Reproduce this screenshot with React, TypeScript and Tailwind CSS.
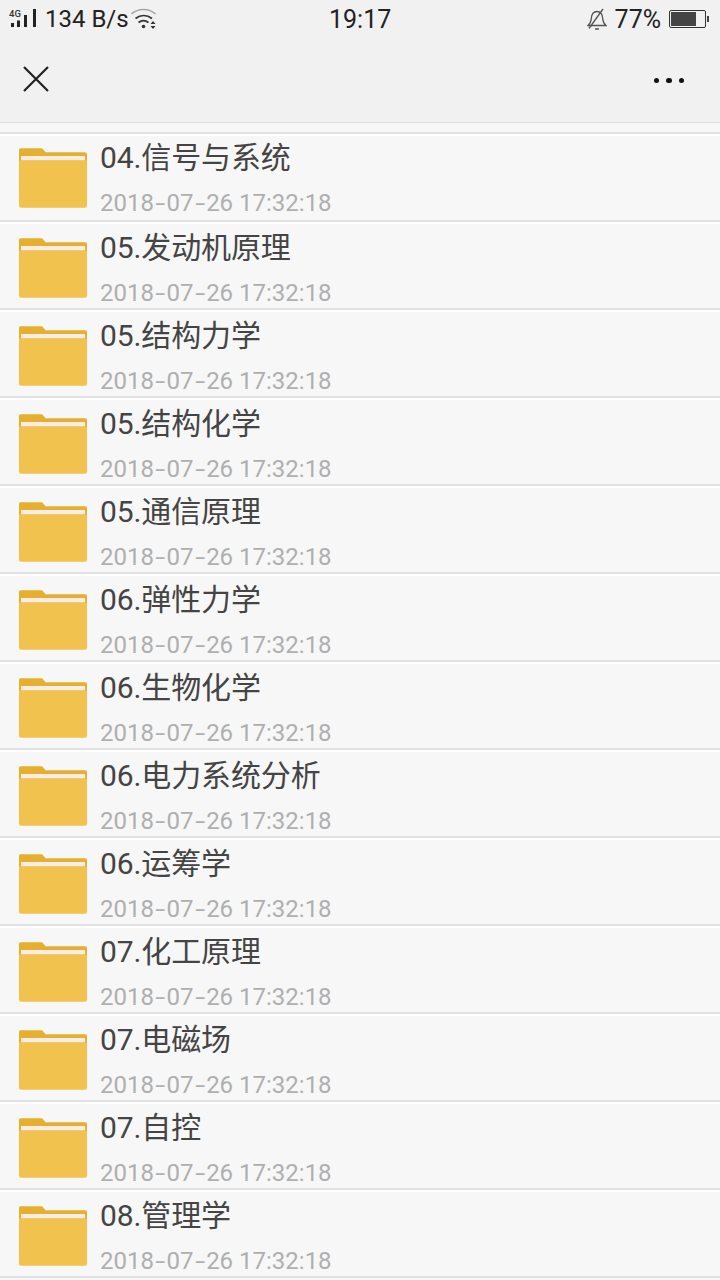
import React from 'react';

const folders = [
  '04.信号与系统',
  '05.发动机原理',
  '05.结构力学',
  '05.结构化学',
  '05.通信原理',
  '06.弹性力学',
  '06.生物化学',
  '06.电力系统分析',
  '06.运筹学',
  '07.化工原理',
  '07.电磁场',
  '07.自控',
  '08.管理学',
];

const FolderIcon = () => (
  <svg width="68" height="61" viewBox="0 0 68 61" className="shrink-0">
    <path d="M0 3.500a2 2 0 0 1 2-2.200h20c1 0 1.500.4 2.200 1.200l2.300 2.800H66a2 2 0 0 1 2 2V14H0z" fill="#e3b030" />
    <rect x="2" y="9" width="64" height="4.500" fill="#f9ece6" />
    <path d="M0 13.500h68V58.700a2 2 0 0 1-2 2H2a2 2 0 0 1-2-2z" fill="#f1c34e" />
  </svg>
);

const SignalIcon = () => (
  <svg width="28" height="20" viewBox="0 0 28 20" className="shrink-0">
    <text x="0" y="7.500" fontSize="9.500" fontWeight="500" fill="#333" fontFamily="Roboto, sans-serif">4G</text>
    <rect x="2" y="14" width="3" height="4" fill="#222" />
    <rect x="8" y="11.500" width="3" height="6.500" fill="#222" />
    <rect x="15" y="6" width="3" height="12" fill="#222" />
    <rect x="24" y="0" width="3" height="18" fill="#222" />
  </svg>
);

const WifiIcon = () => (
  <svg width="26" height="22" viewBox="0 0 26 22" fill="none" className="shrink-0">
    <path d="M0.500 6C7 0 18 0 24.500 6" stroke="#a8a8a8" strokeWidth="1.700" />
    <path d="M4.500 10.500C9.500 6.500 16 6.500 21 10.500" stroke="#333" strokeWidth="1.700" />
    <path d="M7.500 14.500c3-2.200 7-2.200 10 0" stroke="#333" strokeWidth="1.700" />
    <circle cx="12.500" cy="18.500" r="1.800" fill="#333" />
    <path d="M19.500 16h5l-2.500-3zM19.500 18h5l-2.500 3z" fill="#333" />
  </svg>
);

const MutedBell = () => (
  <svg width="20" height="22" viewBox="0 0 20 22" fill="none" className="shrink-0">
    <path
      d="M1 17.500c2-1.500 3-3.500 3.300-7C4.600 6 6.800 3.500 10 3.500s5.400 2.500 5.700 7c.3 3.500 1.300 5.500 3.300 7z"
      stroke="#555"
      strokeWidth="1.300"
    />
    <path d="M2 20.500L16 1" stroke="#555" strokeWidth="1.300" />
    <path d="M8 21h4" stroke="#555" strokeWidth="1.500" />
  </svg>
);

const Battery = () => (
  <div className="flex items-center">
    <div className="h-[18px] w-[37px] rounded-[2px] border border-[#333] p-[1px]">
      <div className="h-full w-[25px] bg-[#444]" />
    </div>
    <div className="ml-[1px] h-[6px] w-[2px] bg-[#444]" />
  </div>
);

const Hyphen = () => (
  <span className="inline-block w-[12.600px] scale-x-[1.500] text-center">-</span>
);

export default function App() {
  return (
    <div
      className="h-[1280px] w-[720px] overflow-hidden bg-[#f7f7f7]"
      style={{ fontFamily: '"Roboto", "Noto Sans CJK SC", sans-serif' }}
    >
      <div className="h-[123px] border-b border-[#dedede] bg-[#f1f1f1]">
        <div className="relative flex h-[38px] items-center justify-between pl-[9px] pr-[11px]">
          <div className="flex items-center">
            <SignalIcon />
            <span className="ml-[8px] text-[24px] leading-none text-[#222]">134 B/s</span>
            <span className="ml-[2px]"><WifiIcon /></span>
          </div>
          <span className="absolute left-[329px] top-[7px] text-[25px] leading-none text-[#222]">19:17</span>
          <div className="flex items-center">
            <MutedBell />
            <span className="ml-[8px] mr-[8px] text-[25px] leading-none text-[#222]">77%</span>
            <Battery />
          </div>
        </div>
        <div className="flex h-[84px] items-center justify-between pb-[2px] pl-[23px] pr-[36px]">
          <svg width="26" height="26" viewBox="0 0 26 26" fill="none" stroke="#222" strokeWidth="2.200">
            <path d="M1 1l24 24M25 1L1 25" />
          </svg>
          <div className="mt-[3px] flex gap-[7px]">
            <span className="h-[5.500px] w-[5.500px] rounded-full bg-[#111]" />
            <span className="h-[5.500px] w-[5.500px] rounded-full bg-[#111]" />
            <span className="h-[5.500px] w-[5.500px] rounded-full bg-[#111]" />
          </div>
        </div>
      </div>
      <div className="mt-[9px] border-t-2 border-[#e2e2e2]">
        {folders.map((name, i) => (
          <div
            key={name + i}
            className={`flex h-[88px] items-start border-t-2 border-b-2 border-t-[#fcfcfc] border-b-[#e2e2e2] pl-[19px] ${i === 0 ? 'pt-[11px]' : 'pt-[13px]'}`}
          >
            <FolderIcon />
            <div className="ml-[13px] min-w-0">
              <div className="-mt-[12px] h-[46px] text-[30px] leading-[46px] tracking-[-0.12px] text-[#444444]">{name}</div>
              <div className="mt-[6px] text-[24px] leading-[32px] text-[#afafaf]">
                2018<Hyphen />07<Hyphen />26 17:32:18
              </div>
            </div>
          </div>
        ))}
      </div>
    </div>
  );
}
